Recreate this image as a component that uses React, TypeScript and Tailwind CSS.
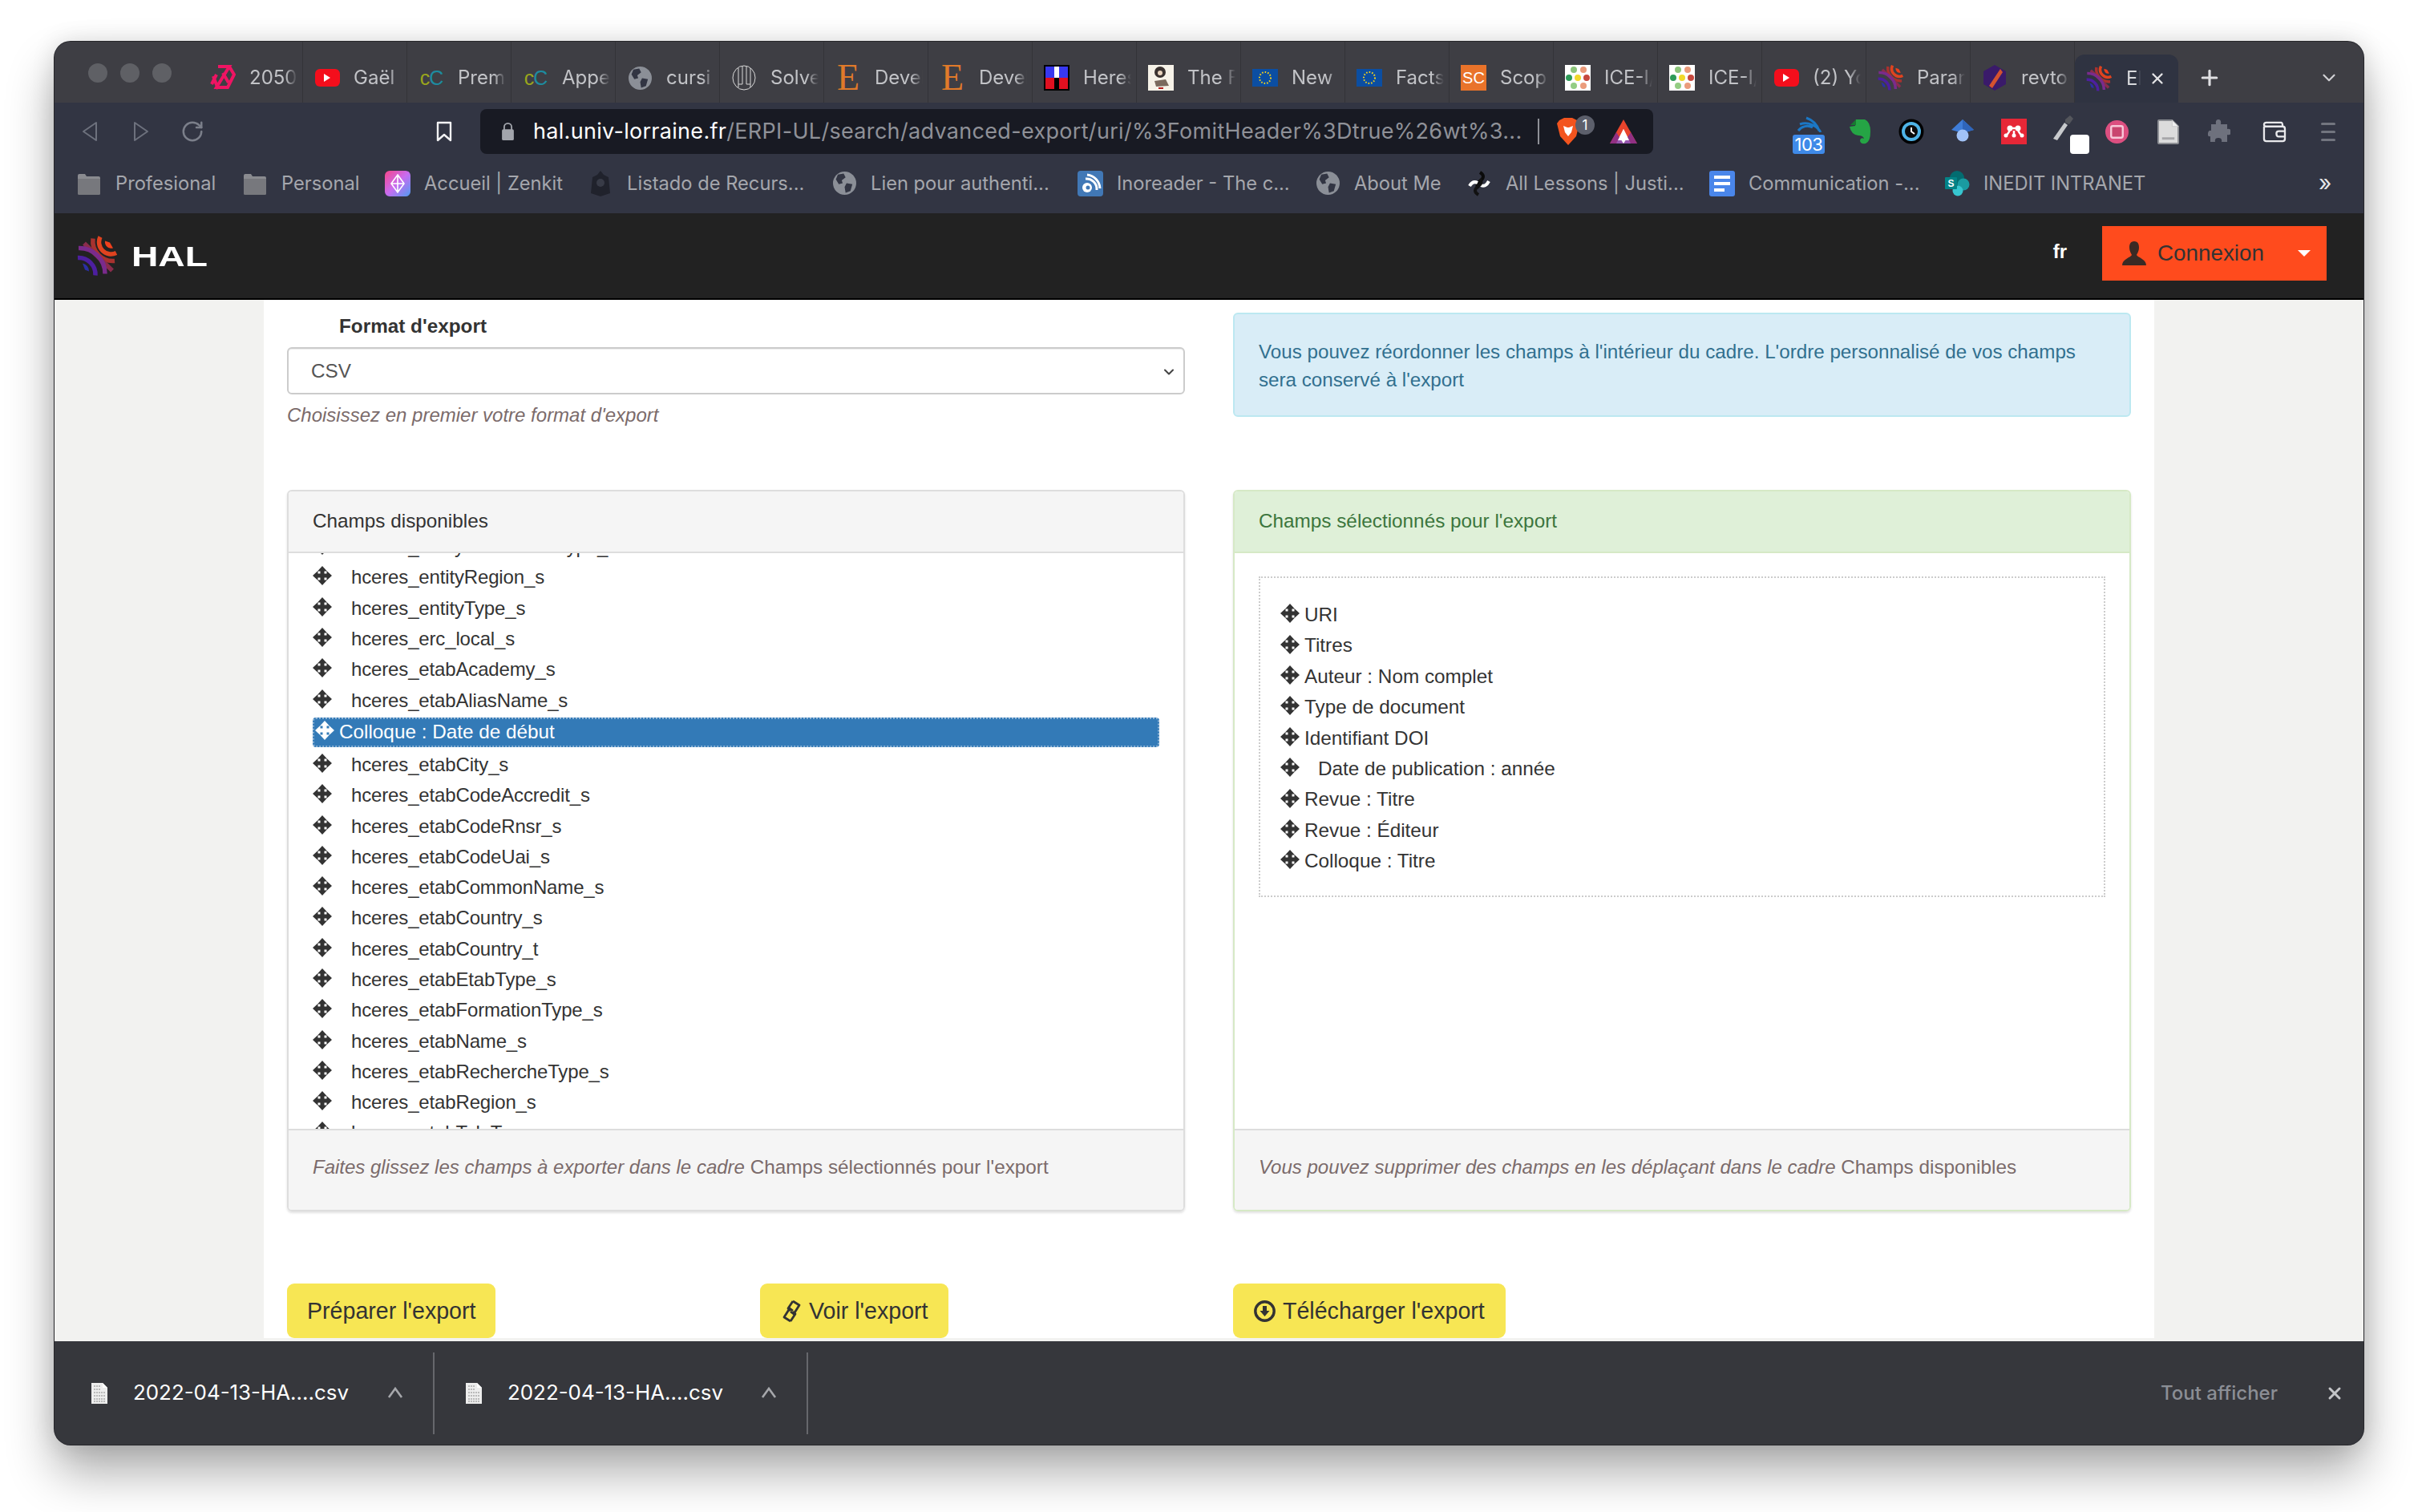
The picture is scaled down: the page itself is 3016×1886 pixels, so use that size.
import React from "react";
import { ChevronDown, Plus, RotateCw, X } from "lucide-react";

const UI = "font-['Inter','Noto_Sans',sans-serif]";
const PAGE = "font-['Liberation_Sans',Arial,sans-serif]";

function HalLogo({ className }: { className: string }) {
  return (
    <svg viewBox="0 0 50 50" className={className} fill="none" strokeLinecap="butt">
      <path d="M35 6 A8 8 0 0 0 45 15 L41 8 Z" fill="#f0401c" />
      <path d="M29 1 A15 15 0 0 0 49 21" stroke="#e0431f" strokeWidth="5.5" />
      <path d="M20 3 A25 25 0 0 0 47 31" stroke="#a8322f" strokeWidth="5.5" />
      <path d="M9 9 L44 43" stroke="#8a2c4c" strokeWidth="5.5" />
      <path d="M2 15 A32 32 0 0 1 35 47" stroke="#7a2b8c" strokeWidth="5.5" />
      <path d="M1 27 A21 21 0 0 1 23 49" stroke="#4d1fa0" strokeWidth="5.5" />
      <path d="M7 34 A10 10 0 0 1 15 44 L10 42 Z" fill="#2b2fa5" />
    </svg>
  );
}

function Globe() {
  return (
    <svg viewBox="0 0 24 24" className="w-[29px] h-[29px]">
      <circle cx="12" cy="12" r="12" fill="#8b8f97" />
      <path d="M5 3 L11 2 L13 6 L9 9 L10 12 L6 13 L3 8 Z M14 12 L20 13 L18 20 L13 22 L12 16 Z" fill="#323543" />
    </svg>
  );
}

function Youtube() {
  return (
    <span className="w-[31px] h-[22px] rounded-[6px] bg-[#f40e1c] flex items-center justify-center">
      <span className="w-0 h-0 border-y-[5px] border-y-transparent border-l-[8px] border-l-white" />
    </span>
  );
}

function CC() {
  return (
    <span className="w-[32px] flex justify-center text-[25px] leading-none tracking-[-1px] font-['Liberation_Sans',sans-serif]">
      <span className="text-[#9aa61c]">c</span>
      <span className="text-[#1d8ba0]">C</span>
    </span>
  );
}

function EFav() {
  return (
    <span className="w-[32px] h-[32px] text-center text-[46px] leading-[32px] text-[#e07a2a] font-['Liberation_Serif',serif]">E</span>
  );
}

function EU() {
  return (
    <svg viewBox="0 0 32 22" className="w-[32px] h-[22px]">
      <rect width="32" height="22" fill="#0b4ea2" />
      <circle cx="16" cy="11" r="7" fill="none" stroke="#f6d21b" strokeWidth="2" strokeDasharray="1.6 2" />
    </svg>
  );
}

function Dots() {
  return (
    <svg viewBox="0 0 32 32" className="w-[32px] h-[32px]">
      <rect width="32" height="32" fill="#fff" />
      <circle cx="11" cy="6" r="4" fill="#8cc47a" />
      <circle cx="23" cy="6" r="4" fill="#ea9a7a" />
      <circle cx="5" cy="16" r="4" fill="#2d9b58" />
      <circle cx="16" cy="16" r="4" fill="#f0d82a" />
      <circle cx="27" cy="16" r="4" fill="#c6483e" />
      <circle cx="11" cy="26" r="4" fill="#94cd84" />
      <circle cx="23" cy="26" r="4" fill="#eb9c7c" />
    </svg>
  );
}

function Hex2050() {
  return (
    <svg viewBox="0 0 32 32" className="w-[32px] h-[32px]" fill="none" stroke="#ef1463" strokeWidth="4">
      <path d="M10 2 H24 L8 28 H22 L30 12 L24 2 M4 14 L10 30 M16 10 L23 22 M2 24 L8 12" />
    </svg>
  );
}

function SolveFav() {
  return (
    <svg viewBox="0 0 30 32" className="w-[30px] h-[32px]" fill="none" stroke="#d8d8d8" strokeWidth="1">
      <ellipse cx="15" cy="16" rx="14" ry="15" />
      <path d="M8 4 V28 M13 2 V24 M18 2 V24 M23 4 V28 M8 24 H13 M18 24 H23" />
    </svg>
  );
}

function HereFav() {
  return (
    <span className="w-[32px] h-[32px] bg-black flex flex-col p-[2px]">
      <span className="h-[14px] bg-[#3838f0] flex justify-center">
        <span className="w-[6px] bg-white" />
      </span>
      <span className="h-[14px] bg-[#e01020] flex justify-center">
        <span className="w-[6px] bg-black" />
      </span>
    </span>
  );
}

function TheFav() {
  return (
    <svg viewBox="0 0 32 32" className="w-[32px] h-[32px]">
      <rect width="32" height="32" fill="#f6f2e8" />
      <circle cx="15" cy="9" r="7" fill="#3a3230" />
      <circle cx="15" cy="10" r="3" fill="#e9d3bd" />
      <path d="M8 20 L22 18 L26 26 L10 27 Z" fill="#7a6a5e" />
      <rect x="13" y="28" width="6" height="2" fill="#b32020" />
    </svg>
  );
}

function RevtoFav() {
  return (
    <svg viewBox="0 0 30 32" className="w-[30px] h-[32px]">
      <path d="M15 0 L29 8 V24 L15 32 L1 24 V8 Z" fill="#3a1a6a" />
      <path d="M8 26 L22 5 L25 9 L12 29 Z" fill="#d4522f" />
    </svg>
  );
}

const tabs: { icon: React.ReactNode; text: string }[] = [
  { icon: <Hex2050 />, text: "2050 Tod" },
  { icon: <Youtube />, text: "Gaël Cha" },
  { icon: <CC />, text: "Premiers" },
  { icon: <CC />, text: "Apperçu" },
  { icon: <Globe />, text: "cursi" },
  { icon: <SolveFav />, text: "Solve" },
  { icon: <EFav />, text: "Develop" },
  { icon: <EFav />, text: "Develop" },
  { icon: <HereFav />, text: "Heres" },
  { icon: <TheFav />, text: "The F" },
  { icon: <EU />, text: "New p" },
  { icon: <EU />, text: "Facts" },
  {
    icon: (
      <span className="w-[32px] h-[32px] bg-[#e9732a] text-white text-[20px] leading-[32px] text-center font-['Liberation_Sans',sans-serif]">
        SC
      </span>
    ),
    text: "Scopus",
  },
  { icon: <Dots />, text: "ICE-I/" },
  { icon: <Dots />, text: "ICE-I/" },
  { icon: <Youtube />, text: "(2) You" },
  { icon: <HalLogo className="w-[32px] h-[32px]" />, text: "Param" },
  { icon: <RevtoFav />, text: "revtools" },
];

function TabStrip() {
  return (
    <div className={`h-[76px] bg-[#3e3e44] flex items-stretch shrink-0 ${UI}`}>
      <div className="w-[180px] flex items-center pl-[42px] gap-[16px] pt-[2px]">
        <span className="w-[24px] h-[24px] rounded-full bg-[#5f6065]" />
        <span className="w-[24px] h-[24px] rounded-full bg-[#5f6065]" />
        <span className="w-[24px] h-[24px] rounded-full bg-[#5f6065]" />
      </div>
      {tabs.map((t, i) => (
        <div key={i} className="w-[130px] flex items-center pl-[14px] pt-[14px] border-r border-r-[#333338] shrink-0">
          <span className="w-[32px] h-[32px] flex items-center justify-center shrink-0">{t.icon}</span>
          <span className="ml-[17px] w-[60px] overflow-hidden whitespace-nowrap text-[24px] text-[#c2c3c7] [mask-image:linear-gradient(to_right,black_75%,transparent)]">
            {t.text}
          </span>
        </div>
      ))}
      <div className="w-[129px] mt-[16px] bg-[#2f3341] rounded-t-[12px] flex items-center pl-[14px] shrink-0">
        <span className="w-[32px] h-[32px] shrink-0">
          <HalLogo className="w-[32px] h-[32px]" />
        </span>
        <span className="ml-[18px] w-[18px] overflow-hidden whitespace-nowrap text-[24px] text-[#d8d9dc] [mask-image:linear-gradient(to_right,black_70%,transparent)]">
          ERPI
        </span>
        <X className="ml-[10px] w-[22px] h-[22px] text-[#e4e4e6]" strokeWidth={2.5} />
      </div>
      <div className="flex items-center pl-[24px] pt-[14px]">
        <Plus className="w-[30px] h-[30px] text-[#dfdfe2]" strokeWidth={2.5} />
      </div>
      <div className="flex items-center ml-[121px] pt-[14px]">
        <ChevronDown className="w-[26px] h-[26px] text-[#d0d0d4]" strokeWidth={2} />
      </div>
    </div>
  );
}

function ExtBtn({ children }: { children: React.ReactNode }) {
  return <span className="relative w-[64px] h-[56px] flex items-center justify-center shrink-0">{children}</span>;
}

function Toolbar() {
  return (
    <div className={`h-[64px] pt-[8px] bg-[#323543] flex items-start shrink-0 ${UI}`}>
      <div className="flex pl-[12px]">
        <ExtBtn>
          <svg viewBox="0 0 20 26" className="w-[20px] h-[26px]" fill="none" stroke="#6d717d" strokeWidth="2" strokeLinejoin="round">
            <path d="M18 2 V24 L2 13 Z" />
          </svg>
        </ExtBtn>
        <ExtBtn>
          <svg viewBox="0 0 20 26" className="w-[20px] h-[26px]" fill="none" stroke="#6d717d" strokeWidth="2" strokeLinejoin="round">
            <path d="M2 2 V24 L18 13 Z" />
          </svg>
        </ExtBtn>
        <ExtBtn>
          <RotateCw className="w-[30px] h-[30px] text-[#7b7f8a]" strokeWidth={2} />
        </ExtBtn>
      </div>
      <span className="ml-[262px] w-[40px] h-[56px] flex items-center justify-center">
        <svg viewBox="0 0 20 26" className="w-[20px] h-[26px]" fill="none" stroke="#f2f2f4" strokeWidth="2.4" strokeLinejoin="round">
          <path d="M2 2 H18 V24 L10 17 L2 24 Z" />
        </svg>
      </span>
      <div className="ml-[25px] w-[1463px] h-[56px] bg-[#181a23] rounded-[8px] flex items-center pl-[26px]">
        <svg viewBox="0 0 18 26" className="w-[17px] h-[24px] shrink-0">
          <path d="M4 11 V7 A5 5 0 0 1 14 7 V11" fill="none" stroke="#a2a5ac" strokeWidth="2" />
          <rect x="1" y="10" width="16" height="15" rx="2" fill="#a2a5ac" />
        </svg>
        <span className="ml-[23px] w-[1234px] overflow-hidden whitespace-nowrap text-[27px] text-[#8f9198]">
          <span className="text-white tracking-[0.3px]">hal.univ-lorraine.fr</span>
          <span className="tracking-[0.32px]">/ERPI-UL/search/advanced-export/uri/%3FomitHeader%3Dtrue%26wt%3...</span>
        </span>
        <span className="ml-[19px] w-[2px] h-[32px] bg-[#8f9198]" />
        <span className="relative ml-[21px] w-[32px] h-[36px]">
          <svg viewBox="0 0 30 36" className="w-[30px] h-[36px]">
            <path d="M4 4 L10 1 H20 L26 4 L29 8 L25 24 L15 35 L5 24 L1 8 Z" fill="#f3541e" />
            <path d="M9 11 L14 13 H16 L21 11 L19 19 L15 24 L11 19 Z" fill="#fff" />
          </svg>
          <span className="absolute -top-[2px] left-[24px] w-[24px] h-[24px] rounded-full bg-[#5c5f6b] text-white text-[17px] leading-[24px] text-center">
            1
          </span>
        </span>
        <svg viewBox="0 0 36 32" className="ml-[34px] w-[36px] h-[32px]">
          <path d="M18 1 L35 31 H1 Z" fill="#e9442c" />
          <path d="M18 13 L27 31 H9 Z" fill="#fff" />
          <path d="M1 31 L9 17 L18 31 Z M35 31 L27 17 L18 31 Z" fill="#7a2c9a" opacity="0.8" />
          <path d="M18 13 L25 27 H11 Z" fill="#fff" />
        </svg>
      </div>
      <div className="ml-[162px] flex">
        <ExtBtn>
          <svg viewBox="0 0 34 22" className="w-[34px] h-[22px] -mt-[20px]" fill="none" stroke="#1b77c5" strokeWidth="3">
            <path d="M4 20 A14 14 0 0 1 22 16 M6 12 A22 22 0 0 1 32 22 M14 4 A26 26 0 0 1 30 20" />
          </svg>
          <span className="absolute left-[12px] bottom-0 w-[40px] h-[24px] rounded-[3px] bg-[#3f8ae8] text-white text-[22px] leading-[24px] text-center tracking-[-0.5px]">
            103
          </span>
        </ExtBtn>
        <ExtBtn>
          <svg viewBox="0 0 28 32" className="w-[28px] h-[32px]">
            <path d="M9 1 H20 Q27 4 27 16 Q27 29 21 31 Q14 32 14 27 Q15 23 19 25 Q18 21 12 21 Q3 20 1 10 L8 9 Z" fill="#25a545" />
            <path d="M2 8 L9 1 V8 Z" fill="#167a30" />
          </svg>
        </ExtBtn>
        <ExtBtn>
          <svg viewBox="0 0 32 32" className="w-[32px] h-[32px]">
            <circle cx="16" cy="16" r="15.5" fill="#000" />
            <circle cx="16" cy="16" r="12" fill="#4eb3e6" />
            <circle cx="16" cy="16" r="8" fill="#0a0a0a" />
            <path d="M16 11 V16 L20 19" stroke="#fff" strokeWidth="2" fill="none" />
          </svg>
        </ExtBtn>
        <ExtBtn>
          <svg viewBox="0 0 28 30" className="w-[28px] h-[30px]">
            <path d="M14 0 L28 13 L14 17 L0 13 Z" fill="#3f7dd8" />
            <path d="M14 0 L28 13 L14 17 Z" fill="#2f65bb" />
            <circle cx="14" cy="20" r="7.5" fill="#a1c2f7" />
          </svg>
        </ExtBtn>
        <ExtBtn>
          <svg viewBox="0 0 32 32" className="w-[32px] h-[32px]">
            <rect width="32" height="32" fill="#e62737" />
            <circle cx="11" cy="12" r="3.5" fill="#fff" />
            <circle cx="21" cy="12" r="3.5" fill="#fff" />
            <circle cx="16" cy="14" r="2" fill="#e62737" />
            <path d="M6 21 Q11 17 11 12 H21 Q21 17 26 21 M16 15 V21" stroke="#fff" strokeWidth="2.5" fill="none" />
            <circle cx="6" cy="21" r="2.5" fill="#fff" />
            <circle cx="16" cy="21" r="2.5" fill="#fff" />
            <circle cx="26" cy="21" r="2.5" fill="#fff" />
          </svg>
        </ExtBtn>
        <ExtBtn>
          <svg viewBox="0 0 28 34" className="w-[28px] h-[34px] -ml-[6px] -mt-[8px]">
            <path d="M2 30 L16 10 L20 13 L7 32 Z" fill="#c8cacd" />
            <path d="M17 6 L23 1 L27 5 L22 12 L17 10 Z" fill="#54565c" />
          </svg>
          <span className="absolute left-[38px] bottom-0 w-[24px] h-[24px] rounded-[4px] bg-white" />
        </ExtBtn>
        <ExtBtn>
          <svg viewBox="0 0 30 30" className="w-[29px] h-[29px]">
            <circle cx="15" cy="15" r="15" fill="#dc4f80" />
            <rect x="7.5" y="7.5" width="15" height="15" rx="2" fill="#c9456f" stroke="#f6c8d8" strokeWidth="2.5" />
          </svg>
        </ExtBtn>
        <ExtBtn>
          <svg viewBox="0 0 28 32" className="w-[27px] h-[31px]">
            <path d="M1 2 Q1 1 2 1 H19 L27 9 V30 Q27 31 26 31 H2 Q1 31 1 30 Z" fill="#dcdcdc" stroke="#8d8f94" strokeWidth="2" />
            <path d="M19 1 V9 H27" fill="#f0f0f0" stroke="#c9c9cb" />
            <rect x="6" y="23" width="16" height="3" fill="#a7a7a9" />
          </svg>
        </ExtBtn>
        <ExtBtn>
          <svg viewBox="0 0 28 30" className="w-[28px] h-[30px]">
            <path d="M10 6 Q9 0 13 0 Q17 0 16 6 H24 V12 Q29 11 29 16 Q29 20 24 19 V28 H17 Q18 23 13 23 Q8 23 9 28 H3 V21 Q-1 22 0 17 Q1 13 4 14 V6 Z" fill="#6e717d" />
          </svg>
        </ExtBtn>
        <span className="w-[4px]" />
        <ExtBtn>
          <svg viewBox="0 0 32 28" className="w-[31px] h-[27px]" fill="none" stroke="#e9e9ec" strokeWidth="2.4">
            <path d="M3 7 V23 Q3 26 6 26 H27 Q30 26 30 23 V10 Q30 7 27 7 H6 Q3 7 3 5 Q3 2 6 2 H25 Q27 2 27 7" />
            <path d="M30 13 H22 Q19 13 19 16 Q19 20 22 20 H30" />
          </svg>
        </ExtBtn>
        <span className="w-[4px]" />
        <ExtBtn>
          <span className="flex flex-col gap-[7px]">
            <span className="w-[18px] h-[3px] rounded-full bg-[#72757f]" />
            <span className="w-[18px] h-[3px] rounded-full bg-[#72757f]" />
            <span className="w-[18px] h-[3px] rounded-full bg-[#72757f]" />
          </span>
        </ExtBtn>
      </div>
    </div>
  );
}

function Folder() {
  return (
    <svg viewBox="0 0 30 32" className="w-[30px] h-[32px]">
      <path d="M1 6 Q1 4 3 4 H10 L12 7 H27 Q29 7 29 9 V28 Q29 30 27 30 H3 Q1 30 1 28 Z" fill="#8a8b90" />
      <path d="M1 10 H29 V28 Q29 30 27 30 H3 Q1 30 1 28 Z" fill="#77787d" />
    </svg>
  );
}

const bookmarks: { w: string; icon: React.ReactNode; text: string }[] = [
  { w: "w-[207px]", icon: <Folder />, text: "Profesional" },
  { w: "w-[178px]", icon: <Folder />, text: "Personal" },
  {
    w: "w-[253px]",
    icon: (
      <svg viewBox="0 0 32 32" className="w-[32px] h-[32px]">
        <defs>
          <linearGradient id="zk" x1="0" y1="0" x2="1" y2="1">
            <stop offset="0" stopColor="#f6468a" />
            <stop offset="0.5" stopColor="#c86cf0" />
            <stop offset="1" stopColor="#4f9cf2" />
          </linearGradient>
        </defs>
        <rect width="32" height="32" rx="6" fill="url(#zk)" />
        <path d="M16 5 L24 16 L16 27 L8 16 Z M8 16 H24 M16 5 V27" fill="none" stroke="#fff" strokeWidth="1.6" />
      </svg>
    ),
    text: "Accueil | Zenkit",
  },
  {
    w: "w-[304px]",
    icon: (
      <svg viewBox="0 0 28 32" className="w-[28px] h-[32px]" fill="#20222c">
        <path d="M14 0 L18 5 L24 8 L26 28 L14 32 L2 28 L4 8 L10 5 Z" />
        <circle cx="14" cy="15" r="5" fill="#383b47" />
      </svg>
    ),
    text: "Listado de Recurs...",
  },
  { w: "w-[307px]", icon: <Globe />, text: "Lien pour authenti..." },
  {
    w: "w-[296px]",
    icon: (
      <svg viewBox="0 0 32 32" className="w-[32px] h-[32px]">
        <rect width="32" height="32" rx="4" fill="#4178b6" />
        <circle cx="12" cy="21" r="6" fill="#fff" />
        <circle cx="13" cy="21" r="2.5" fill="#4178b6" />
        <path d="M10 10 A13 13 0 0 1 24 24 M12 5 A18 18 0 0 1 28 22" stroke="#fff" strokeWidth="3" fill="none" />
      </svg>
    ),
    text: "Inoreader - The c...",
  },
  { w: "w-[189px]", icon: <Globe />, text: "About Me" },
  {
    w: "w-[303px]",
    icon: (
      <svg viewBox="0 0 30 32" className="w-[30px] h-[32px]" fill="none" strokeWidth="4">
        <path d="M16 2 Q24 7 16 13 Q10 17 14 22" stroke="#0a0a0a" />
        <path d="M3 19 Q7 12 13 15 M27 13 Q23 21 17 18" stroke="#ffffff" />
        <path d="M14 30 Q6 25 14 19 Q20 15 16 10" stroke="#111111" />
      </svg>
    ),
    text: "All Lessons | Justi...",
  },
  {
    w: "w-[293px]",
    icon: (
      <span className="w-[32px] h-[32px] rounded-[3px] bg-[#4a86ea] flex flex-col justify-center gap-[4px] pl-[6px]">
        <span className="w-[20px] h-[4px] bg-white" />
        <span className="w-[20px] h-[4px] bg-white" />
        <span className="w-[13px] h-[4px] bg-white" />
      </span>
    ),
    text: "Communication -...",
  },
  {
    w: "w-[400px]",
    icon: (
      <svg viewBox="0 0 32 32" className="w-[32px] h-[32px]">
        <circle cx="16" cy="9" r="9" fill="#036c70" />
        <circle cx="24" cy="17" r="7.5" fill="#1a9ba1" />
        <circle cx="17" cy="25" r="6.5" fill="#37c6d0" />
        <rect x="1" y="8" width="15" height="15" rx="1" fill="#038387" />
        <text x="8.5" y="20" fontSize="12" fontWeight="700" fill="#fff" textAnchor="middle" fontFamily="Liberation Sans">S</text>
      </svg>
    ),
    text: "INEDIT INTRANET",
  },
];

function Bookmarks() {
  return (
    <div className={`h-[74px] bg-[#323543] flex items-center pl-[27px] shrink-0 ${UI}`}>
      {bookmarks.map((b, i) => (
        <div key={i} className={`flex items-center shrink-0 whitespace-nowrap ${b.w}`}>
          <span className="w-[32px] h-[32px] flex items-center justify-center shrink-0">{b.icon}</span>
          <span className="ml-[17px] text-[23.7px] text-[#a5a7ad]">{b.text}</span>
        </div>
      ))}
      <span className="ml-[67px] text-[28px] leading-none text-[#e6e6e8] -mt-[2px]">»</span>
    </div>
  );
}

function HalHeader() {
  return (
    <div className={`h-[108px] bg-[#222222] border-b-2 border-b-black flex items-center pl-[28px] shrink-0 ${PAGE}`}>
      <HalLogo className="w-[50px] h-[51px]" />
      <span className="ml-[18px] text-[35px] font-bold leading-none text-white origin-left scale-x-[1.32]">HAL</span>
      <span className="ml-auto text-[24px] font-bold text-white -mt-[10px]">fr</span>
      <div className="ml-[44px] mr-[46px] w-[280px] h-[68px] bg-[#ff4b1d] flex items-center pl-[25px] -mt-[6px]">
        <svg viewBox="0 0 30 30" className="w-[30px] h-[30px] shrink-0" fill="#3a2a24">
          <path d="M15 0 C20 0 21 4 21 8 C21 12 19 15 18 17 C19 20 30 22 30 30 H0 C0 22 11 20 12 17 C11 15 9 12 9 8 C9 4 10 0 15 0 Z" />
        </svg>
        <span className="ml-[14px] text-[27.8px] text-[#333333]">Connexion</span>
        <span className="ml-[42px] w-0 h-0 border-x-[8px] border-x-transparent border-t-[8px] border-t-white" />
      </div>
    </div>
  );
}

function MoveIcon({ className = "text-[#333333]" }: { className?: string }) {
  return (
    <svg viewBox="0 0 24 24" className={`w-[24px] h-[24px] -mt-[4px] shrink-0 ${className}`} fill="currentColor">
      <path d="M12 0 L18 6.5 H14.5 V9.5 H17.5 V6 L24 12 L17.5 18 V14.5 H14.5 V17.5 H18 L12 24 L6 17.5 H9.5 V14.5 H6.5 V18 L0 12 L6.5 6 V9.5 H9.5 V6.5 H6 Z" />
    </svg>
  );
}

const leftRowsTop = [
  "hceres_entityRechercheType_s",
  "hceres_entityRegion_s",
  "hceres_entityType_s",
  "hceres_erc_local_s",
  "hceres_etabAcademy_s",
  "hceres_etabAliasName_s",
];
const leftRowsBottom = [
  "hceres_etabCity_s",
  "hceres_etabCodeAccredit_s",
  "hceres_etabCodeRnsr_s",
  "hceres_etabCodeUai_s",
  "hceres_etabCommonName_s",
  "hceres_etabCountry_s",
  "hceres_etabCountry_t",
  "hceres_etabEtabType_s",
  "hceres_etabFormationType_s",
  "hceres_etabName_s",
  "hceres_etabRechercheType_s",
  "hceres_etabRegion_s",
  "hceres_etabTel_T",
];

function LeftRow({ text }: { text: string }) {
  return (
    <div className="h-[38.3px] flex items-center text-[#333333] whitespace-nowrap">
      <MoveIcon />
      <span className="ml-[24px] text-[24px] tracking-[-0.15px]">{text}</span>
    </div>
  );
}

const selected = [
  "URI",
  "Titres",
  "Auteur : Nom complet",
  "Type de document",
  "Identifiant DOI",
  "Date de publication : année",
  "Revue : Titre",
  "Revue : Éditeur",
  "Colloque : Titre",
];

function LeftPanel() {
  return (
    <div className="h-[900px] border-2 border-[#dddddd] rounded-[6px] flex flex-col overflow-hidden shadow-[0_2px_3px_rgba(0,0,0,0.12)]">
      <div className="h-[77px] bg-[#f5f5f5] border-b-2 border-b-[#dddddd] pl-[30px] flex items-center text-[#333333] shrink-0">
        Champs disponibles
      </div>
      <div className="flex-1 overflow-hidden bg-white pl-[30px] pr-[30px]">
        <div className="-mt-[27px]">
          {leftRowsTop.map((t) => (
            <LeftRow key={t} text={t} />
          ))}
          <div className="mt-[2px] mb-[3px] h-[37px] bg-[#337ab7] border-2 border-dotted border-[#8fb4d6] rounded-[4px] flex items-center pl-[1px] text-white whitespace-nowrap">
            <MoveIcon className="text-white" />
            <span className="ml-[6px]">Colloque : Date de début</span>
          </div>
          {leftRowsBottom.map((t) => (
            <LeftRow key={t} text={t} />
          ))}
        </div>
      </div>
      <div className="h-[101px] bg-[#f5f5f5] border-t-2 border-t-[#dddddd] pl-[30px] pt-[28px] text-[#7b6b6b] whitespace-nowrap shrink-0">
        <em className="text-[24px]">Faites glissez les champs à exporter dans le cadre</em> Champs sélectionnés pour l'export
      </div>
    </div>
  );
}

function RightPanel() {
  return (
    <div className="h-[900px] border-2 border-[#d6e9c6] rounded-[6px] flex flex-col overflow-hidden shadow-[0_2px_3px_rgba(0,0,0,0.12)]">
      <div className="h-[77px] bg-[#dff0d8] border-b-2 border-b-[#d6e9c6] pl-[30px] flex items-center text-[#3c763d] shrink-0">
        Champs sélectionnés pour l'export
      </div>
      <div className="flex-1 bg-white pl-[30px] pr-[30px] pt-[29px]">
        <div className="h-[400px] border-2 border-dotted border-[#cccccc] pt-[27px] pl-[25px]">
          {selected.map((t, i) => (
            <div key={t} className="h-[38.4px] flex items-center text-[#333333] whitespace-nowrap">
              <MoveIcon />
              <span className={i === 5 ? "ml-[23px]" : "ml-[6px]"}>{t}</span>
            </div>
          ))}
        </div>
      </div>
      <div className="h-[101px] bg-[#f5f5f5] border-t-2 border-t-[#dddddd] pl-[30px] pt-[28px] text-[#7b6b6b] whitespace-nowrap shrink-0">
        <em className="text-[24px]">Vous pouvez supprimer des champs en les déplaçant dans le cadre</em> Champs disponibles
      </div>
    </div>
  );
}

function LinkIcon() {
  return (
    <svg viewBox="0 0 25 29" className="w-[25px] h-[29px] shrink-0" fill="none" stroke="#333333" strokeWidth="2.8" strokeLinejoin="round">
      <path d="M14 2 L22 7 L15 18 L11 15 M14 2 L8 11 L11 14" />
      <path d="M11 27 L3 22 L10 11 L14 14 M11 27 L17 18 L14 15" />
    </svg>
  );
}

function DownloadIcon() {
  return (
    <svg viewBox="0 0 27 27" className="w-[27px] h-[27px] shrink-0">
      <circle cx="13.5" cy="13.5" r="11.7" fill="none" stroke="#333333" strokeWidth="3.4" />
      <path d="M11 7 H16 V13 H19.5 L13.5 20 L7.5 13 H11 Z" fill="#333333" />
    </svg>
  );
}

function YellowBtn({ children, className }: { children: React.ReactNode; className: string }) {
  return (
    <div className={`h-[68px] bg-[#f7e654] rounded-[9px] flex items-center text-[28.6px] text-[#333333] whitespace-nowrap ${className}`}>
      {children}
    </div>
  );
}

function FileIcon() {
  return (
    <svg viewBox="0 0 22 28" className="w-[22px] h-[28px] shrink-0">
      <path d="M1 1 H15 L21 7 V27 H1 Z" fill="#ededed" />
      <path d="M15 1 V7 H21 Z" fill="#ffffff" />
      <path d="M4 5 H12 M4 9 H12 M4 13 H18 M4 17 H18 M4 21 H18 M4 24 H18" stroke="#a9a9a9" strokeWidth="1.6" strokeDasharray="2 1" />
    </svg>
  );
}

function Shelf() {
  const item = (cls: string) => (
    <div className={`flex items-center h-[102px] border-r-2 border-r-[#66676c] ${cls}`}>
      <FileIcon />
      <span className="ml-[31px] text-[25.9px] text-white whitespace-nowrap">2022-04-13-HA....csv</span>
      <svg viewBox="0 0 20 14" className="ml-auto mr-[37px] w-[20px] h-[14px] -mt-[2px]" fill="none" stroke="#a6a7ab" strokeWidth="2.6">
        <path d="M2 13 L10 2 L18 13" />
      </svg>
    </div>
  );
  return (
    <div className={`h-[129px] bg-[#36373c] flex items-center shrink-0 ${UI}`}>
      {item("w-[474px] pl-[45px]")}
      {item("w-[466px] pl-[38px]")}
      <span className="ml-auto text-[24px] font-medium text-[#8b8e95] whitespace-nowrap">Tout afficher</span>
      <X className="ml-[59px] mr-[24px] w-[24px] h-[24px] text-[#c4c5c8]" strokeWidth={3} />
    </div>
  );
}

function PageBody() {
  return (
    <div className={`flex-1 bg-[#f2f2f0] overflow-hidden pb-[4px] ${PAGE}`}>
      <div className="ml-[261px] w-[2358px] h-full bg-white px-[29px] pt-[16px] text-[24.3px] overflow-hidden">
        <div className="grid grid-cols-[1120px_1120px] gap-x-[60px] h-[221px]">
          <div>
            <div className="pl-[65px] h-[33px] pt-[1px] leading-[32px] font-bold text-[#333333]">Format d'export</div>
            <div className="mt-[10px] h-[59px] border-2 border-[#cccccc] rounded-[6px] flex items-center pl-[28px] pr-[8px] pt-[2px] text-[#555555] shadow-[inset_0_1px_1px_rgba(0,0,0,0.08)]">
              CSV
              <ChevronDown className="ml-auto w-[20px] h-[20px] text-[#444444]" strokeWidth={2.5} />
            </div>
            <div className="mt-[10px] h-[32px] leading-[32px] italic text-[24px] text-[#7b6b6b]">Choisissez en premier votre format d'export</div>
          </div>
          <div className="h-[130px] bg-[#d9edf7] border-2 border-[#bce8f1] rounded-[6px] px-[30px] pt-[29px] text-[24.2px] leading-[35px] text-[#31708f]">
            Vous pouvez réordonner les champs à l'intérieur du cadre. L'ordre personnalisé de vos champs sera conservé à l'export
          </div>
        </div>
        <div className="grid grid-cols-[1120px_1120px] gap-x-[60px]">
          <LeftPanel />
          <RightPanel />
        </div>
        <div className="mt-[90px] grid grid-cols-[590px_590px_1fr]">
          <div className="flex">
            <YellowBtn className="px-[25px]">Préparer l'export</YellowBtn>
          </div>
          <div className="flex">
            <YellowBtn className="pl-[27px] pr-[25px] gap-[9px]">
              <LinkIcon />
              Voir l'export
            </YellowBtn>
          </div>
          <div className="flex">
            <YellowBtn className="pl-[26px] pr-[26px] gap-[9px]">
              <DownloadIcon />
              Télécharger l'export
            </YellowBtn>
          </div>
        </div>
      </div>
    </div>
  );
}

export default function App() {
  return (
    <div className="w-[3016px] h-[1886px] bg-white pl-[68px] pt-[52px] overflow-hidden">
      <div className="w-[2880px] h-[1750px] rounded-[20px] overflow-hidden flex flex-col bg-[#323543] shadow-[0_0_0_1px_#26262a,0_34px_60px_0_rgba(0,0,0,0.33),0_0_30px_rgba(0,0,0,0.12)]">
        <TabStrip />
        <Toolbar />
        <Bookmarks />
        <HalHeader />
        <PageBody />
        <Shelf />
      </div>
    </div>
  );
}
